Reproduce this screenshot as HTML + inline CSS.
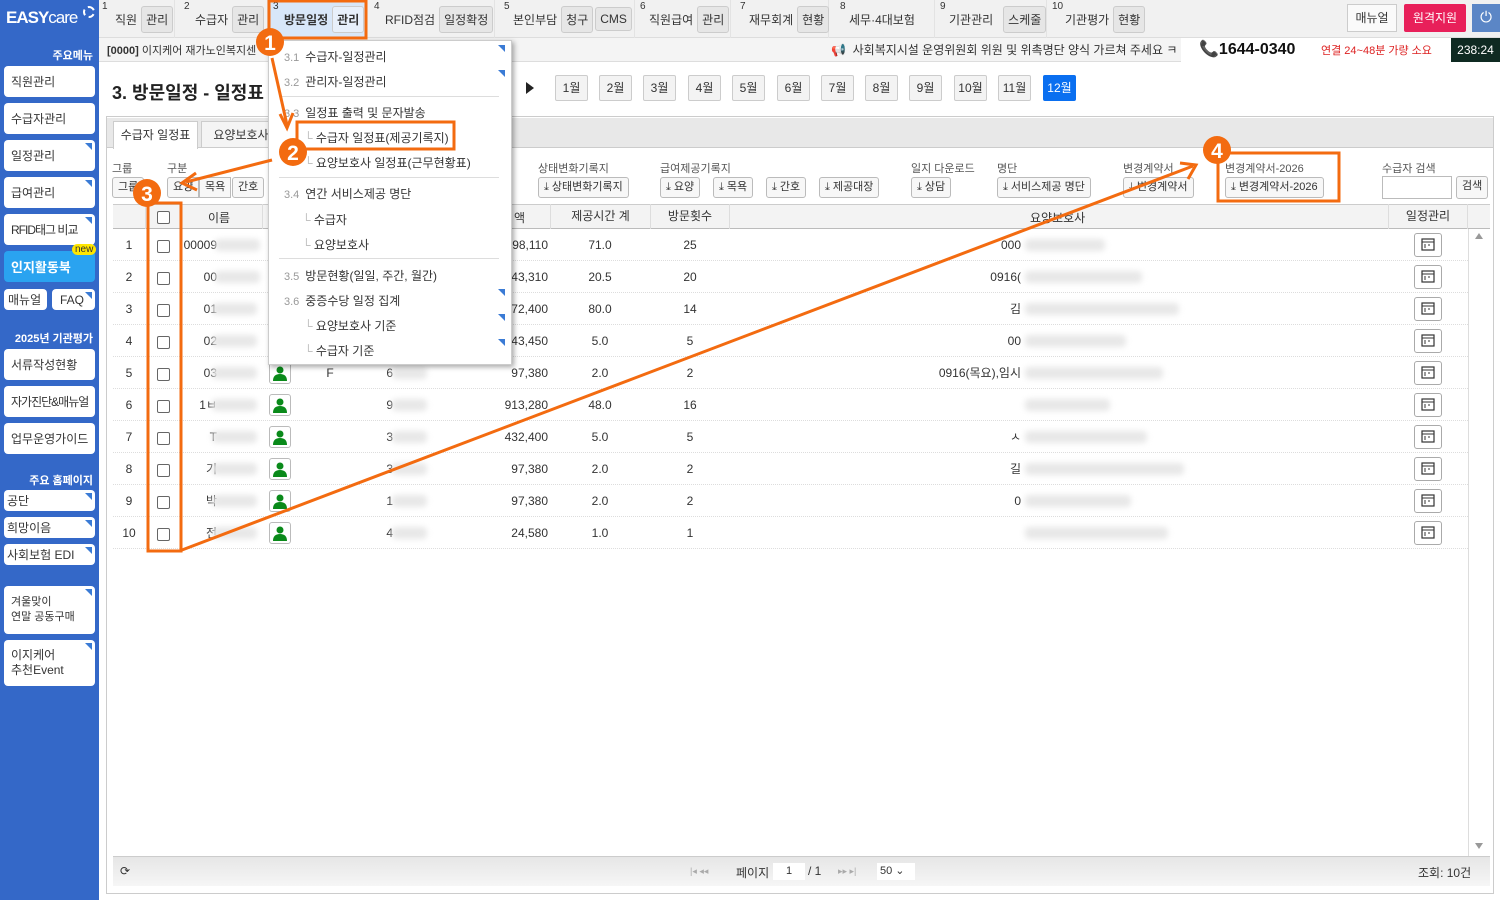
<!DOCTYPE html>
<html><head><meta charset="utf-8">
<style>
*{box-sizing:border-box;margin:0;padding:0}
body{width:1500px;height:900px;overflow:hidden;background:#fff;font-family:"Liberation Sans","Noto Sans CJK KR",sans-serif;font-size:12px;color:#333;position:relative}
.abs{position:absolute}
#side{left:0;top:0;width:99px;height:900px;background:#3468c8}
.sb{position:absolute;left:4px;width:91px;background:#fff;border-radius:4px;font-size:12px;padding-left:7px;display:flex;align-items:center;color:#333;white-space:nowrap}
.tri:after{content:"";position:absolute;right:3px;top:3px;border-left:7px solid transparent;border-top:7px solid #3a7bd5}
.sh{position:absolute;right:6px;color:#fff;font-size:11px;font-weight:bold}
#top{left:99px;top:0;width:1401px;height:38px;background:#f1f1f1;border-bottom:1px solid #ddd}
.tg{position:absolute;top:0;height:38px;display:flex;align-items:center;font-size:12px;border-right:1px solid #e3e3e3;white-space:nowrap}
.tg sup{position:absolute;top:1px;left:3px;font-size:10px}
.tb{display:inline-block;background:#e6e6e6;border:1px solid #ccc;border-radius:3px;padding:4px 4px;margin-left:4px;font-size:12px;position:relative;white-space:nowrap}
#bar2{left:99px;top:38px;width:1401px;height:24px;background:#f4f4f4;border-bottom:1px solid #ddd}
.mb{position:absolute;top:75px;height:26px;width:33px;border:1px solid #ccc;background:#f3f3f3;border-radius:2px;font-size:12px;text-align:center;line-height:24px}
#panel{left:106px;top:116px;width:1388px;height:778px;border:1px solid #ccc;background:#fff}
.btn{position:absolute;top:177px;height:21px;border:1px solid #bbb;border-radius:3px;background:#f7f7f7;font-size:11px;line-height:19px;padding:0 5px;white-space:nowrap}
.lbl{position:absolute;top:160px;font-size:11px;color:#555;white-space:nowrap}
.row{position:absolute;left:113px;width:1355px;height:32px;border-bottom:1px dotted #ddd}
.c{position:absolute;top:0;height:32px;line-height:32px;text-align:center;font-size:12px;white-space:nowrap}
.cb{position:absolute;left:157px;width:13px;height:13px;border:1px solid #666;border-radius:2px;background:#fff}
.pi{position:absolute;left:269px;width:22px;height:22px;border:1px solid #bbb;border-radius:3px;background:#fff}
.ci{position:absolute;left:1414px;width:28px;height:24px;border:1px solid #aaa;border-radius:3px;background:#fff}
.blur{position:absolute;height:12px;background:#e8e8e8;filter:blur(3px);border-radius:4px}
#menu{left:268px;top:40px;width:244px;height:325px;background:#fff;box-shadow:2px 2px 5px rgba(0,0,0,.35);border:1px solid #ccc}
.mi{position:absolute;left:15px;font-size:12px;color:#333;white-space:nowrap}
.mi b{font-weight:normal;color:#999;font-size:11px;margin-right:6px}
.mt{position:absolute;left:229px;border-left:7px solid transparent;border-top:7px solid #3a7bd5}
.sep{position:absolute;left:10px;width:220px;height:1px;background:#ddd}
</style></head><body>

<div id="side" class="abs">
 <div class="abs" style="left:6px;top:8px;color:#fff;font-weight:bold;font-size:17px;letter-spacing:-1px">EASY<span style="font-weight:normal">care</span></div>
 <div class="abs" style="left:83px;top:6px;width:12px;height:12px;border:2px dashed #fff;border-radius:50%"></div>
 <div class="sh" style="top:47px">주요메뉴</div>
 <div class="sb" style="top:66px;height:31px">직원관리</div>
 <div class="sb" style="top:103px;height:31px">수급자관리</div>
 <div class="sb tri" style="top:140px;height:31px">일정관리</div>
 <div class="sb tri" style="top:177px;height:31px">급여관리</div>
 <div class="sb tri" style="top:214px;height:31px;letter-spacing:-1px">RFID태그 비교</div>
 <div class="sb" style="top:251px;height:31px;background:#2aa3f0;color:#fff;font-weight:bold;font-size:13px">인지활동북</div>
 <div class="abs" style="left:72px;top:244px;background:#ffe600;border-radius:8px;font-size:10px;padding:0 3px;color:#333">new</div>
 <div class="sb" style="top:289px;height:21px;width:43px;padding-left:4px">매뉴얼</div>
 <div class="sb tri" style="top:289px;height:21px;width:43px;left:52px;padding-left:8px">FAQ</div>
 <div class="sh" style="top:330px">2025년 기관평가</div>
 <div class="sb" style="top:349px;height:31px">서류작성현황</div>
 <div class="sb" style="top:386px;height:31px;letter-spacing:-1px">자가진단&amp;매뉴얼</div>
 <div class="sb" style="top:423px;height:31px">업무운영가이드</div>
 <div class="sh" style="top:472px">주요 홈페이지</div>
 <div class="sb tri" style="top:490px;height:21px;padding-left:3px">공단</div>
 <div class="sb tri" style="top:517px;height:21px;padding-left:3px">희망이음</div>
 <div class="sb tri" style="top:544px;height:21px;padding-left:3px">사회보험 EDI</div>
 <div class="sb tri" style="top:586px;height:48px;font-size:11px;line-height:15px">겨울맞이<br>연말 공동구매</div>
 <div class="sb tri" style="top:640px;height:46px;line-height:15px">이지케어<br>추천Event</div>
</div>

<div id="top" class="abs">
 <div class="tg" style="left:0;width:76px"><sup>1</sup><span style="margin-left:16px">직원</span><span class="tb">관리</span></div>
 <div class="tg" style="left:82px;width:87px"><sup>2</sup><span style="margin-left:14px">수급자</span><span class="tb">관리</span></div>
 <div class="tg" style="left:171px;width:96px;background:#d8e7f9"><sup>3</sup><b style="margin-left:14px">방문일정</b><span class="tb" style="font-weight:bold;background:#e8f0fb">관리</span></div>
 <div class="tg" style="left:272px;width:124px"><sup>4</sup><span style="margin-left:14px">RFID점검</span><span class="tb">일정확정</span></div>
 <div class="tg" style="left:402px;width:134px"><sup>5</sup><span style="margin-left:12px">본인부담</span><span class="tb">청구</span><span class="tb" style="margin-left:2px">CMS</span></div>
 <div class="tg" style="left:538px;width:94px"><sup>6</sup><span style="margin-left:12px">직원급여</span><span class="tb">관리</span></div>
 <div class="tg" style="left:638px;width:92px"><sup>7</sup><span style="margin-left:12px">재무회계</span><span class="tb">현황</span></div>
 <div class="tg" style="left:738px;width:98px"><sup>8</sup><span style="margin-left:12px">세무·4대보험</span></div>
 <div class="tg" style="left:838px;width:110px"><sup>9</sup><span style="margin-left:12px">기관관리</span><span class="tb" style="margin-left:10px">스케줄</span></div>
 <div class="tg" style="left:950px;width:110px;border:none"><sup>10</sup><span style="margin-left:16px">기관평가</span><span class="tb">현황</span></div>
 <div class="abs" style="left:1248px;top:4px;width:50px;height:28px;border:1px solid #ccc;background:#fafafa;line-height:26px;text-align:center">매뉴얼</div>
 <div class="abs" style="left:1305px;top:4px;width:62px;height:28px;background:#e8205a;color:#fff;line-height:28px;text-align:center;border-radius:2px">원격지원</div>
 <div class="abs" style="left:1373px;top:4px;width:28px;height:28px;background:#5b86c6;color:#fff;line-height:28px;text-align:center;font-size:15px">⏻</div>
</div>

<div id="bar2" class="abs">
 <div class="abs" style="left:8px;top:4px;font-size:11px;white-space:nowrap"><b>[0000]</b> 이지케어 재가노인복지센</div>
 <div class="abs" style="left:732px;top:3px;font-size:12px;white-space:nowrap">📢&nbsp; 사회복지시설 운영위원회 위원 및 위촉명단 양식 가르쳐 주세요 ㅋ</div>
 <div class="abs" style="left:1082px;top:0;width:270px;height:24px;background:#fff"></div>
 <div class="abs" style="left:1100px;top:1px;font-size:16px;font-weight:bold;color:#111;white-space:nowrap"><span style="color:#c00">📞</span>1644-0340</div>
 <div class="abs" style="left:1222px;top:4px;font-size:11px;color:#d22;white-space:nowrap">연결 24~48분 가량 소요</div>
 <div class="abs" style="left:1352px;top:0;width:49px;height:24px;background:#0f2a22;color:#fff;line-height:24px;text-align:center;font-size:12px">238:24</div>
</div>

<div class="abs" style="left:112px;top:79px;font-size:18px;font-weight:bold;color:#222;white-space:nowrap">3. 방문일정 - 일정표</div>
<div class="abs" style="left:526px;top:82px;border-left:8px solid #222;border-top:6px solid transparent;border-bottom:6px solid transparent"></div>
<div class="mb" style="left:555px">1월</div><div class="mb" style="left:599px">2월</div><div class="mb" style="left:643px">3월</div><div class="mb" style="left:688px">4월</div><div class="mb" style="left:732px">5월</div><div class="mb" style="left:777px">6월</div><div class="mb" style="left:821px">7월</div><div class="mb" style="left:865px">8월</div><div class="mb" style="left:909px">9월</div><div class="mb" style="left:954px">10월</div><div class="mb" style="left:998px">11월</div>
<div class="mb" style="left:1043px;background:#0a6ff0;color:#fff;border-color:#0a6ff0">12월</div>

<div id="panel" class="abs"></div>
<div class="abs" style="left:107px;top:118px;width:1386px;height:30px;background:#e8e8e8;border-bottom:1px solid #ccc"></div>
<div class="abs" style="left:113px;top:121px;width:85px;height:28px;background:#fff;border:1px solid #ccc;border-bottom:none;line-height:27px;text-align:center">수급자 일정표</div>
<div class="abs" style="left:201px;top:121px;width:80px;height:27px;background:#f4f4f4;border:1px solid #ccc;line-height:26px;text-align:center">요양보호사</div>

<div class="lbl" style="left:112px">그룹</div><div class="lbl" style="left:167px">구분</div>
<div class="btn" style="left:112px">그룹</div>
<div class="btn" style="left:167px;border-radius:3px 0 0 3px">요양</div><div class="btn" style="left:199px;border-radius:0">목욕</div><div class="btn" style="left:232px">간호</div>
<div class="lbl" style="left:538px">상태변화기록지</div><div class="btn" style="left:538px">⤓ 상태변화기록지</div>
<div class="lbl" style="left:660px">급여제공기록지</div>
<div class="btn" style="left:660px">⤓ 요양</div><div class="btn" style="left:713px">⤓ 목욕</div><div class="btn" style="left:766px">⤓ 간호</div><div class="btn" style="left:819px">⤓ 제공대장</div>
<div class="lbl" style="left:911px">일지 다운로드</div><div class="btn" style="left:911px">⤓ 상담</div>
<div class="lbl" style="left:997px">명단</div><div class="btn" style="left:997px">⤓ 서비스제공 명단</div>
<div class="lbl" style="left:1123px">변경계약서</div><div class="btn" style="left:1123px">⤓ 변경계약서</div>
<div class="lbl" style="left:1225px">변경계약서-2026</div><div class="btn" style="left:1225px">⤓ 변경계약서-2026</div>
<div class="lbl" style="left:1382px">수급자 검색</div>
<div class="abs" style="left:1382px;top:176px;width:70px;height:23px;border:1px solid #bbb"></div>
<div class="btn" style="left:1456px;top:176px;height:23px">검색</div>

<div class="abs" style="left:113px;top:204px;width:1377px;height:25px;background:#f3f3f3;border-top:1px solid #ccc;border-bottom:1px solid #bbb"></div>
<div class="abs" style="left:145px;top:204px;height:25px;border-left:1px solid #ddd"></div>
<div class="cb" style="top:211px"></div>
<div class="abs" style="left:208px;top:209px">이름</div>
<div class="abs" style="left:262px;top:204px;height:25px;border-left:1px solid #ddd"></div>
<div class="abs" style="left:514px;top:209px">액</div>
<div class="abs" style="left:550px;top:204px;width:100px;height:25px;border-left:1px solid #ddd;text-align:center;line-height:24px">제공시간 계</div>
<div class="abs" style="left:650px;top:204px;width:80px;height:25px;border-left:1px solid #ddd;border-right:1px solid #ddd;text-align:center;line-height:24px">방문횟수</div>
<div class="abs" style="left:1030px;top:209px">요양보호사</div>
<div class="abs" style="left:1388px;top:204px;width:80px;height:25px;border-left:1px solid #ddd;border-right:1px solid #ddd;text-align:center;line-height:24px">일정관리</div>
<div class="abs" style="left:1475px;top:233px;border-bottom:6px solid #999;border-left:4px solid transparent;border-right:4px solid transparent"></div>
<div class="abs" style="left:1475px;top:843px;border-top:6px solid #999;border-left:4px solid transparent;border-right:4px solid transparent"></div>
<div class="abs" style="left:1468px;top:229px;height:627px;border-left:1px solid #ddd"></div>

<div id="rows"></div>
<script>
var d=[["00009","","","98,110","71.0","25","000"],["00","","","43,310","20.5","20","0916("],["01","","","72,400","80.0","14","김"],["02","","","43,450","5.0","5","00"],["03","F","6","97,380","2.0","2","0916(목요),임시"],["1ㅂ","","9","913,280","48.0","16",""],["T","","3","432,400","5.0","5","ㅅ"],["기","","3","97,380","2.0","2","길"],["박","","1","97,380","2.0","2","0"],["전","","4","24,580","1.0","1",""]];
var h="";
for(var i=0;i<10;i++){var y=229+i*32;var r=d[i];
h+='<div class="row" style="top:'+y+'px"><div class="c" style="left:0;width:32px">'+(i+1)+'</div>'+
'<div class="c" style="left:68px;width:36px;text-align:right">'+r[0]+'</div>'+
'<div class="c" style="left:187px;width:60px">'+r[1]+'</div>'+
'<div class="c" style="left:260px;width:20px;text-align:right">'+r[2]+'</div>'+
'<div class="c" style="left:337px;width:98px;text-align:right">'+r[3]+'</div>'+
'<div class="c" style="left:437px;width:100px">'+r[4]+'</div>'+
'<div class="c" style="left:537px;width:80px">'+r[5]+'</div>'+
'<div class="c" style="left:700px;width:208px;text-align:right">'+r[6]+'</div></div>';
h+='<div class="cb" style="top:'+(y+11)+'px"></div>';
h+='<div class="blur" style="left:'+(i<2?215:212)+'px;top:'+(y+10)+'px;width:45px"></div>';
h+='<div class="blur" style="left:392px;top:'+(y+10)+'px;width:35px"></div>';
h+='<div class="blur" style="left:1025px;top:'+(y+10)+'px;width:'+(80+(i*37%90))+'px"></div>';
if(i>=4)h+='<div class="pi" style="top:'+(y+5)+'px"><svg width="20" height="20" viewBox="0 0 20 20"><circle cx="10" cy="7" r="3.5" fill="#0a8a1a"/><path d="M3 18 Q3 11 10 11 Q17 11 17 18Z" fill="#0a8a1a"/></svg></div>';
h+='<div class="ci" style="top:'+(y+4)+'px"><svg width="26" height="22" viewBox="0 0 26 22"><rect x="7" y="5" width="12" height="11" fill="none" stroke="#333" stroke-width="1.2"/><line x1="7" y1="8" x2="19" y2="8" stroke="#333"/><path d="M9 11h2M13 11h2M9 13h2" stroke="#333"/></svg></div>';}
document.getElementById("rows").innerHTML=h;
</script>

<div class="abs" style="left:113px;top:856px;width:1377px;height:30px;background:linear-gradient(#e6e6e6,#f6f6f6);border-top:1px solid #ccc"></div>
<div class="abs" style="left:120px;top:864px;font-size:12px">⟳</div>
<div class="abs" style="left:690px;top:866px;font-size:9px;color:#aaa">|◂ ◂◂</div>
<div class="abs" style="left:736px;top:864px;font-size:12px">페이지</div>
<div class="abs" style="left:773px;top:863px;width:32px;height:17px;background:#fff;text-align:center;font-size:11px;line-height:17px">1</div>
<div class="abs" style="left:808px;top:864px">/ 1</div>
<div class="abs" style="left:838px;top:866px;font-size:9px;color:#aaa">▸▸ ▸|</div>
<div class="abs" style="left:877px;top:863px;width:38px;height:17px;background:#fff;font-size:11px;line-height:17px;padding-left:3px">50 ⌄</div>
<div class="abs" style="left:1418px;top:864px">조회: 10건</div>

<div id="menu" class="abs">
 <div class="mi" style="top:7px"><b>3.1</b>수급자-일정관리</div><div class="mt" style="top:4px"></div>
 <div class="mi" style="top:32px"><b>3.2</b>관리자-일정관리</div><div class="mt" style="top:29px"></div>
 <div class="sep" style="top:55px"></div>
 <div class="mi" style="top:63px"><b>3.3</b>일정표 출력 및 문자발송</div>
 <div class="mi" style="top:88px;left:35px"><span style="color:#bbb">└ </span>수급자 일정표(제공기록지)</div>
 <div class="mi" style="top:113px;left:35px"><span style="color:#bbb">└ </span>요양보호사 일정표(근무현황표)</div>
 <div class="sep" style="top:136px"></div>
 <div class="mi" style="top:144px"><b>3.4</b>연간 서비스제공 명단</div>
 <div class="mi" style="top:170px;left:33px"><span style="color:#bbb">└ </span>수급자</div>
 <div class="mi" style="top:195px;left:33px"><span style="color:#bbb">└ </span>요양보호사</div>
 <div class="sep" style="top:217px"></div>
 <div class="mi" style="top:226px"><b>3.5</b>방문현황(일일, 주간, 월간)</div>
 <div class="mi" style="top:251px"><b>3.6</b>중증수당 일정 집계</div><div class="mt" style="top:248px"></div>
 <div class="mi" style="top:276px;left:35px"><span style="color:#bbb">└ </span>요양보호사 기준</div><div class="mt" style="top:273px"></div>
 <div class="mi" style="top:301px;left:35px"><span style="color:#bbb">└ </span>수급자 기준</div><div class="mt" style="top:298px"></div>
</div>

<svg class="abs" style="left:0;top:0" width="1500" height="900">
 <g fill="none" stroke="#f36b10" stroke-width="3">
  <rect x="269" y="1" width="97" height="37"/>
  <rect x="297" y="122" width="157" height="27"/>
  <rect x="148" y="203" width="33" height="348"/>
  <rect x="1218" y="153" width="121" height="48"/>
  <line x1="272" y1="58" x2="287" y2="125"/>
  <polyline points="280,114 287,128 293,113"/>
  <line x1="272" y1="160" x2="186" y2="182"/>
  <polyline points="196,173 182,183 197,190"/>
  <line x1="182" y1="550" x2="1193" y2="166"/>
  <polyline points="1180,163 1196,165 1188,179"/>
 </g>
 <g font-family="Liberation Sans,sans-serif" font-weight="bold" font-size="21" fill="#fff" text-anchor="middle">
  <circle cx="270" cy="42" r="14" fill="#f36b10"/><text x="270" y="50">1</text>
  <circle cx="293" cy="152" r="14" fill="#f36b10"/><text x="293" y="160">2</text>
  <circle cx="147" cy="193" r="14" fill="#f36b10"/><text x="147" y="201">3</text>
  <circle cx="1217" cy="150" r="14" fill="#f36b10"/><text x="1217" y="158">4</text>
 </g>
</svg>
</body></html>
